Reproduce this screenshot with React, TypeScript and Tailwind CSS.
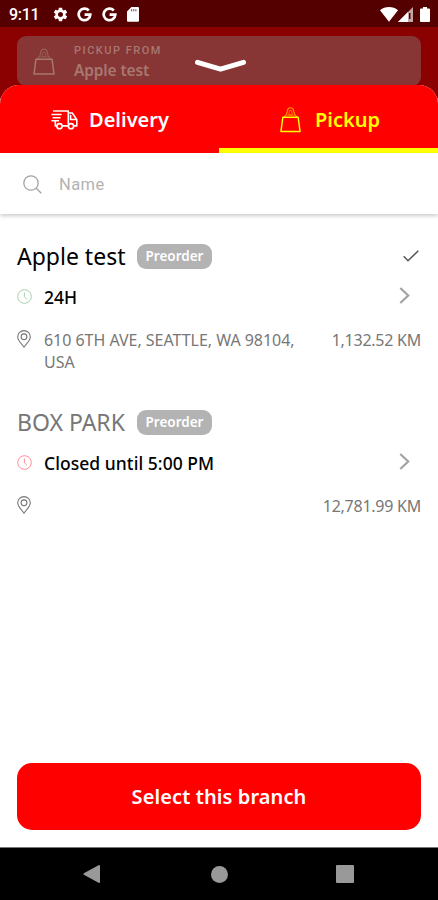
import { MdSettings } from "react-icons/md"

const branches = [
    {
        name: "Apple test",
        selected: true,
        open: true,
        hours: "24H",
        address: "610 6TH AVE, SEATTLE, WA 98104, USA",
        distance: "1,132.52 KM",
    },
    {
        name: "BOX PARK",
        selected: false,
        open: false,
        hours: "Closed until 5:00 PM",
        address: "",
        distance: "12,781.99 KM",
    },
]

const GoogleIcon = () => (
    <svg className="h-[15px] w-[15px]" viewBox="0 0 15 15" fill="none" stroke="currentColor" strokeWidth="2.7">
        <path d="M11.8 3.5A5.8 5.8 0 1 0 13.3 7.6H7.6" />
    </svg>
)

const SdIcon = () => (
    <svg className="h-[15px] w-3" viewBox="0 0 12 15" fill="currentColor">
        <path fillRule="evenodd" d="M4.4 0H11a1 1 0 0 1 1 1v12.8a1 1 0 0 1-1 1H1a1 1 0 0 1-1-1V4.6zM4.3 2.2v2h.8V2.2zM6.4 2.2v2h.8V2.2zM8.5 2.2v2h.8V2.2z" />
    </svg>
)

const BagIcon = ({ className, handle }: { className: string, handle: string }) => (
    <svg className={className} viewBox="0 0 22 27" fill="none" stroke="currentColor" strokeWidth="1.5" strokeLinejoin="round">
        <g className={handle}>
            <path d="M4.6 11C4.8 9.6 6.6 9 7 7.4L8 3.4C8.6.4 13.4.4 14 3.4l1 4c.4 1.6 2.2 2.2 2.4 3.6" strokeWidth="1.2" />
            <path d="M9.2 8.6L9.9 4.2h2.2l.7 4.4zM6.8 9h8.4" strokeWidth=".8" />
        </g>
        <path d="M3 11.2H19L21 26H1z" />
    </svg>
)

const TruckIcon = () => (
    <svg className="h-5 w-[27px]" viewBox="0 0 27 20" fill="none" stroke="currentColor" strokeWidth="1.6" strokeLinejoin="round" strokeLinecap="round">
        <path d="M2.6 1h14.7v12.8M1 4.5h9M2.2 7.7h6.8M1 10.8h6.5M4.3 11v4.9h1.2M11.5 15.9h5.3M17.3 3h4l3.5 5.3 1 1.4v6.2h-2.6M19.6 5.6v3.9h5" />
        <circle cx="8.5" cy="16.2" r="2.6" />
        <circle cx="20" cy="16.2" r="2.6" />
    </svg>
)

const ClockIcon = ({ className }: { className: string }) => (
    <svg className={className} viewBox="0 0 15 15" fill="none" stroke="currentColor" strokeWidth="1">
        <circle cx="7.5" cy="7.5" r="6.8" />
        <path d="M7.4 3.6v4.2l2.3 2.1" />
    </svg>
)

const PinIcon = () => (
    <svg className="mt-px h-[18px] w-[14px] text-[#777777]" viewBox="0 0 14 18" fill="none" stroke="currentColor" strokeWidth="1.1">
        <path d="M7 17.2C4.6 13.8 .7 10.3 .7 6.9a6.3 6.3 0 0 1 12.6 0c0 3.4-3.9 6.9-6.3 10.3z" />
        <circle cx="7" cy="6.8" r="2.9" />
    </svg>
)

const StatusBar = () => (
    <div className="flex h-[27px] items-center bg-[#550000] pl-[9px] pr-2 pt-px text-white">
        <span className="w-[43px] pt-px font-[Roboto] text-[16px] font-medium tracking-[-0.3px]">9:11</span>
        <MdSettings className="h-[17px] w-[17px]" />
        <div className="ml-2 flex items-center gap-[10px]">
            <GoogleIcon />
            <GoogleIcon />
            <SdIcon />
        </div>
        <svg className="ml-auto h-[15px] w-[18px]" viewBox="0 0 18 15" fill="currentColor">
            <path d="M0 3.2C5-1 13-1 18 3.2L9 14.8z" />
        </svg>
        <svg className="h-[15px] w-[15px]" viewBox="0 0 15 15" fill="currentColor">
            <path d="M15 0v15H0z" opacity=".65" />
            <path d="M10 5v10H0z" />
            <path d="M11 6h1.5v6H11z" fill="#550000" />
        </svg>
        <svg className="ml-[7px] h-[15px] w-[10px]" viewBox="0 0 10 15" fill="currentColor">
            <path d="M3 0h4v1.5h2a1 1 0 0 1 1 1V14a1 1 0 0 1-1 1H1a1 1 0 0 1-1-1V2.5a1 1 0 0 1 1-1h2z" />
        </svg>
    </div>
)

const Header = () => (
    <div className="relative h-[71px] bg-[#8b0000] px-[17px] pt-[9px]">
        <div className="flex h-[50px] rounded-[9px] bg-[#873535] pl-4 text-[#a67870]">
            <BagIcon className="mt-3 h-[27px] w-[22px]" handle="text-[#966058]" />
            <div className="ml-[19px] pt-2">
                <div className="font-[Roboto] text-[11px] leading-[14px] font-medium tracking-[1.5px]">PICKUP FROM</div>
                <div className="mt-[2px] text-[15.5px] leading-5 font-semibold tracking-[-0.15px]">Apple test</div>
            </div>
        </div>
        <svg className="absolute left-[194px] top-[31px] h-4 w-[53px]" viewBox="0 0 53 16" fill="none" stroke="#ffffff" strokeWidth="5" strokeLinecap="round" strokeLinejoin="round">
            <path d="M3.5 4.3L26.5 11.2L49.5 4.3" />
        </svg>
    </div>
)

const Branch = ({ branch }: { branch: typeof branches[number] }) => (
    <div className="h-[166px]">
        <div className="flex h-[30px] items-center">
            <h2 className={branch.selected ? "w-[120px] text-[23px] whitespace-nowrap text-black" : "w-[120px] text-[23px] whitespace-nowrap text-[#777777]"}>
                {branch.name}
            </h2>
            <span className="h-[25px] w-[75px] rounded-[9px] bg-[#b3b3b3] text-center text-[13.5px] leading-[25px] font-semibold text-white">Preorder</span>
            {branch.selected && (
                <svg className="ml-auto mr-[2px] h-3 w-4" viewBox="0 0 16 12" fill="none" stroke="#555555" strokeWidth="1.5">
                    <path d="M.7 6.3L5 10.7L15.3.8" />
                </svg>
            )}
        </div>
        <div className="mt-[14px] flex h-6 items-center">
            <ClockIcon className={branch.open ? "mr-3 -mt-px h-[15px] w-[15px] text-[#a9cdb0]" : "mr-3 -mt-px h-[15px] w-[15px] text-[#ff8b95]"} />
            <span className="pt-px text-[17.5px] font-medium tracking-[0.05px] text-black">{branch.hours}</span>
            <svg className="-mt-[3px] mr-[11px] ml-auto h-[17px] w-[11px]" viewBox="0 0 11 17" fill="none" stroke="#a3a3a3" strokeWidth="2.2">
                <path d="M1.3 1L9.2 8.5L1.3 16" />
            </svg>
        </div>
        <div className="mt-5 flex items-start text-[16px] leading-[21.5px] text-[#777777]">
            <PinIcon />
            <span className="mt-px ml-[13px] w-[265px] tracking-[-0.03px]">{branch.address}</span>
            <span className="mt-px ml-auto tracking-[-0.25px] whitespace-nowrap">{branch.distance}</span>
        </div>
    </div>
)

export default function App() {
    return (
        <div className="flex h-[900px] w-[438px] flex-col overflow-hidden bg-[#9b8585] font-['Noto_Sans',sans-serif]">
            <StatusBar />
            <Header />

            <div className="relative -mt-[13px] flex flex-1 flex-col overflow-hidden rounded-t-[19px] bg-white">
                <div className="grid h-[68px] shrink-0 grid-cols-2 bg-[#ff0000] text-[20px] font-semibold">
                    <div className="flex items-center pt-0.5 pl-[51px] text-white">
                        <TruckIcon />
                        <span className="ml-[11px]">Delivery</span>
                    </div>
                    <div className="flex items-center border-b-[5px] border-[#ffff00] pt-[7px] pl-[61px] text-[#ffff00]">
                        <BagIcon className="-mt-[2px] h-[27px] w-[21px]" handle="text-[#ff9d00]" />
                        <span className="ml-[14px]">Pickup</span>
                    </div>
                </div>

                <div className="flex h-[61px] shrink-0 items-center pt-px pl-[23px] shadow-[0_2px_4px_rgba(0,0,0,0.2)]">
                    <svg className="h-[19px] w-[19px]" viewBox="0 0 19 19" fill="none" stroke="#a3a3a3" strokeWidth="1.3">
                        <circle cx="8" cy="8" r="7.2" />
                        <path d="M13 13L18.3 18.3" />
                    </svg>
                    <span className="ml-[17px] pt-0.5 font-[Roboto] text-[16.5px] tracking-[0.4px] text-[#b3b3b3]">Name</span>
                </div>

                <div className="flex-1 px-[17px] pt-[27px]">
                    {branches.map((branch) => (
                        <Branch key={branch.name} branch={branch} />
                    ))}
                </div>

                <div className="px-[17px] pb-[17px]">
                    <button className="h-[67px] w-full rounded-[15px] bg-[#ff0000] text-[20px] font-semibold tracking-[0.1px] text-white">
                        Select this branch
                    </button>
                </div>
            </div>

            <div className="flex h-[53px] items-center border-t border-[#777777] bg-black pl-[83px] text-[#999999]">
                <svg className="h-[18px] w-[17px]" viewBox="0 0 17 18" fill="currentColor">
                    <path d="M16 0Q17 0 17 1V17Q17 18 16 18L.8 9.7Q0 9 .8 8.3z" />
                </svg>
                <div className="ml-[111px] h-[17px] w-[17px] rounded-full bg-[#999999]" />
                <div className="ml-[108px] h-[18px] w-[18px] rounded-[1px] bg-[#999999]" />
            </div>
        </div>
    )
}
